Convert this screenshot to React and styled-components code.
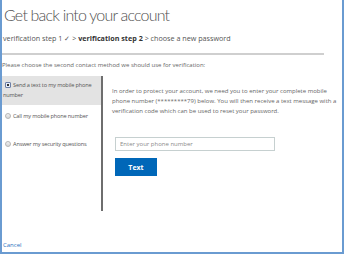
import React from 'react';
import styled, { createGlobalStyle } from 'styled-components';

const GlobalStyle = createGlobalStyle`
  html, body { margin: 0; padding: 0; background: #fff; }
  body { font-family: "Segoe UI", "Open Sans", "Liberation Sans", sans-serif; }
`;

const options = [
    { id: 'sms', label: 'Send a text to my mobile phone number', selected: true },
    { id: 'call', label: 'Call my mobile phone number' },
    { id: 'questions', label: 'Answer my security questions' },
];

const App = () => {
    return (
        <>
            <GlobalStyle />
            <Frame>
                <Title>Get back into your account</Title>
                <Steps>
                    verification step 1 ✓ &gt; <b>verification step 2</b> &gt; choose a new password
                </Steps>
                <Rule />
                <Prompt>Please choose the second contact method we should use for verification:</Prompt>
                <Columns>
                    <Methods>
                        {options.map((o) => (
                            <Method key={o.id} $selected={o.selected}>
                                <Radio $selected={o.selected} />
                                {o.label}
                            </Method>
                        ))}
                    </Methods>
                    <Details>
                        <Info>
                            In order to protect your account, we need you to enter your complete mobile
                            phone number (*********79) below. You will then receive a text message with a
                            verification code which can be used to reset your password.
                        </Info>
                        <PhoneInput placeholder="Enter your phone number" />
                        <SendButton>Text</SendButton>
                    </Details>
                </Columns>
                <Cancel href="#">Cancel</Cancel>
            </Frame>
        </>
    );
};

export default App;

// Styles

const Frame = styled.div`
  width: 344px;
  height: 254px;
  box-sizing: border-box;
  border: 2px solid #6a9bd1;
  border-top: none;
  display: flex;
  flex-direction: column;
  overflow: hidden;
`;

const Title = styled.h1`
  margin: 4px 0 0 2px;
  font-family: "Lato", "Open Sans", sans-serif;
  font-weight: 300;
  font-size: 16px;
  line-height: 22px;
  letter-spacing: -0.8px;
  color: #505050;
`;

const Steps = styled.div`
  margin: 7px 0 0 1px;
  font-size: 7.2px;
  line-height: 10px;
  color: #555;
  b { color: #333; font-weight: 700; }
`;

const Rule = styled.div`
  margin: 10px 0 0 0;
  width: 322px;
  height: 2px;
  background: #cfcfcf;
`;

const Prompt = styled.div`
  margin: 6px 0 0 0;
  font-size: 6px;
  line-height: 9px;
  color: #666;
`;

const Columns = styled.div`
  display: grid;
  grid-template-columns: 101px 1fr;
  margin-top: 6px;
`;

const Methods = styled.div`
  height: 135px;
  border-right: 2px solid #6e6e6e;
  display: flex;
  flex-direction: column;
`;

const Method = styled.div`
  padding: 4px 0 5px 1px;
  min-height: ${(p) => (p.$selected ? '18px' : '17px')};
  background: ${(p) => (p.$selected ? '#e3e3e3' : 'transparent')};
  font-size: 5.6px;
  line-height: 10px;
  letter-spacing: -0.15px;
  color: #555;
  & + & { margin-top: 2px; }
`;

const Radio = styled.span`
  display: inline-block;
  vertical-align: -1px;
  width: 6px;
  height: 6px;
  margin: 0 2px 0 2px;
  box-sizing: border-box;
  border-radius: ${(p) => (p.$selected ? '1px' : '50%')};
  border: 1px solid ${(p) => (p.$selected ? '#6b7fa8' : '#b5b5b5')};
  background: ${(p) => (p.$selected ? 'radial-gradient(circle, #333 45%, #e8eef8 50%)' : 'linear-gradient(#f2f2f2, #d6d6d6)')};
`;

const Details = styled.div`
  padding: 10px 0 0 9px;
  display: flex;
  flex-direction: column;
  align-items: flex-start;
`;

const Info = styled.p`
  margin: 0;
  font-size: 6px;
  line-height: 10px;
  color: #666;
  width: 226px;
`;

const PhoneInput = styled.input`
  margin: 21px 0 0 3px;
  width: 160px;
  height: 14px;
  box-sizing: border-box;
  border: 1px solid #c6d0d0;
  padding: 0 4px;
  font-family: inherit;
  font-size: 6px;
  color: #444;
  outline: none;
  &::placeholder { color: #8a8a8a; }
`;

const SendButton = styled.button`
  margin: 7px 0 0 3px;
  width: 42px;
  height: 18px;
  border: none;
  background: #0067b8;
  color: #fff;
  font-family: inherit;
  font-weight: 700;
  font-size: 7px;
  padding: 0;
`;

const Cancel = styled.a`
  margin: auto 0 2px 1px;
  font-size: 6px;
  line-height: 9px;
  color: #2a6fbe;
  text-decoration: none;
`;
